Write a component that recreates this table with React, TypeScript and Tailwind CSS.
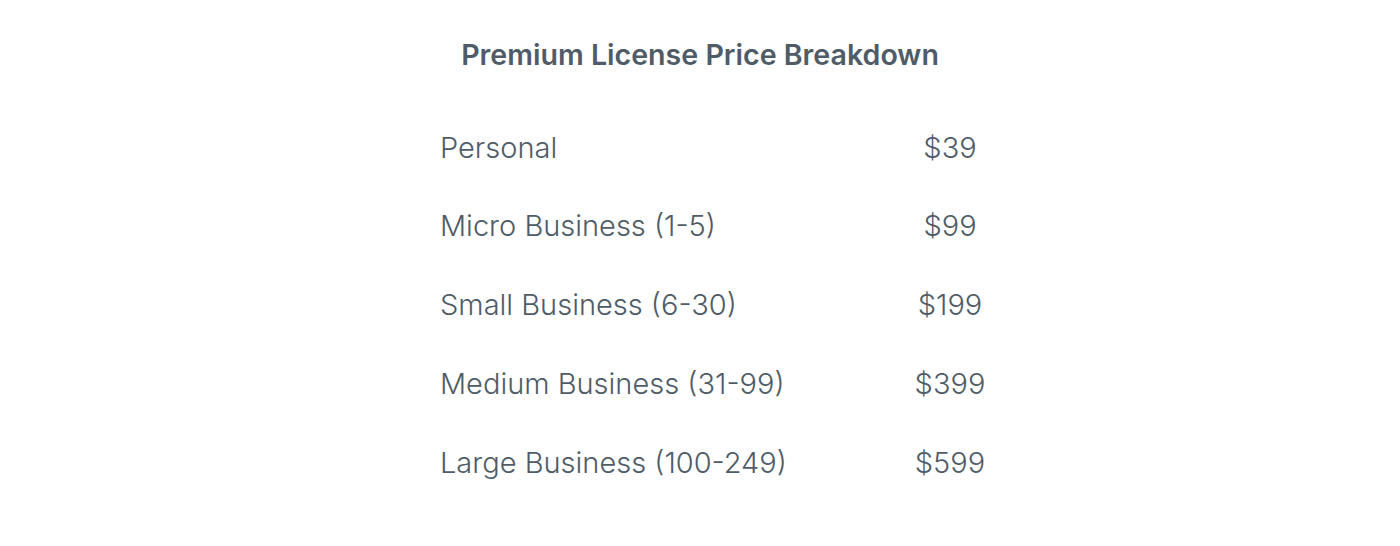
const rows = [
  { label: "Personal", price: "$39" },
  { label: "Micro Business (1-5)", price: "$99" },
  { label: "Small Business (6-30)", price: "$199" },
  { label: "Medium Business (31-99)", price: "$399" },
  { label: "Large Business (100-249)", price: "$599" },
];

export default function App() {
  return (
    <main className="min-h-screen w-full bg-white font-['Inter',sans-serif] text-[#4f5c67]">
      <div className="flex flex-col items-center pt-[39px]">
        <h1 className="text-[28.6px] leading-[32px] font-semibold">
          Premium License Price Breakdown
        </h1>

        <div className="mt-[37px] w-[600px] pl-10">
          {rows.map((row) => (
            <div
              key={row.label}
              className="grid h-[78.75px] grid-cols-[1fr_100px] items-center text-[29px] font-light"
            >
              <span>{row.label}</span>
              <span className="text-center">{row.price}</span>
            </div>
          ))}
        </div>
      </div>
    </main>
  );
}
